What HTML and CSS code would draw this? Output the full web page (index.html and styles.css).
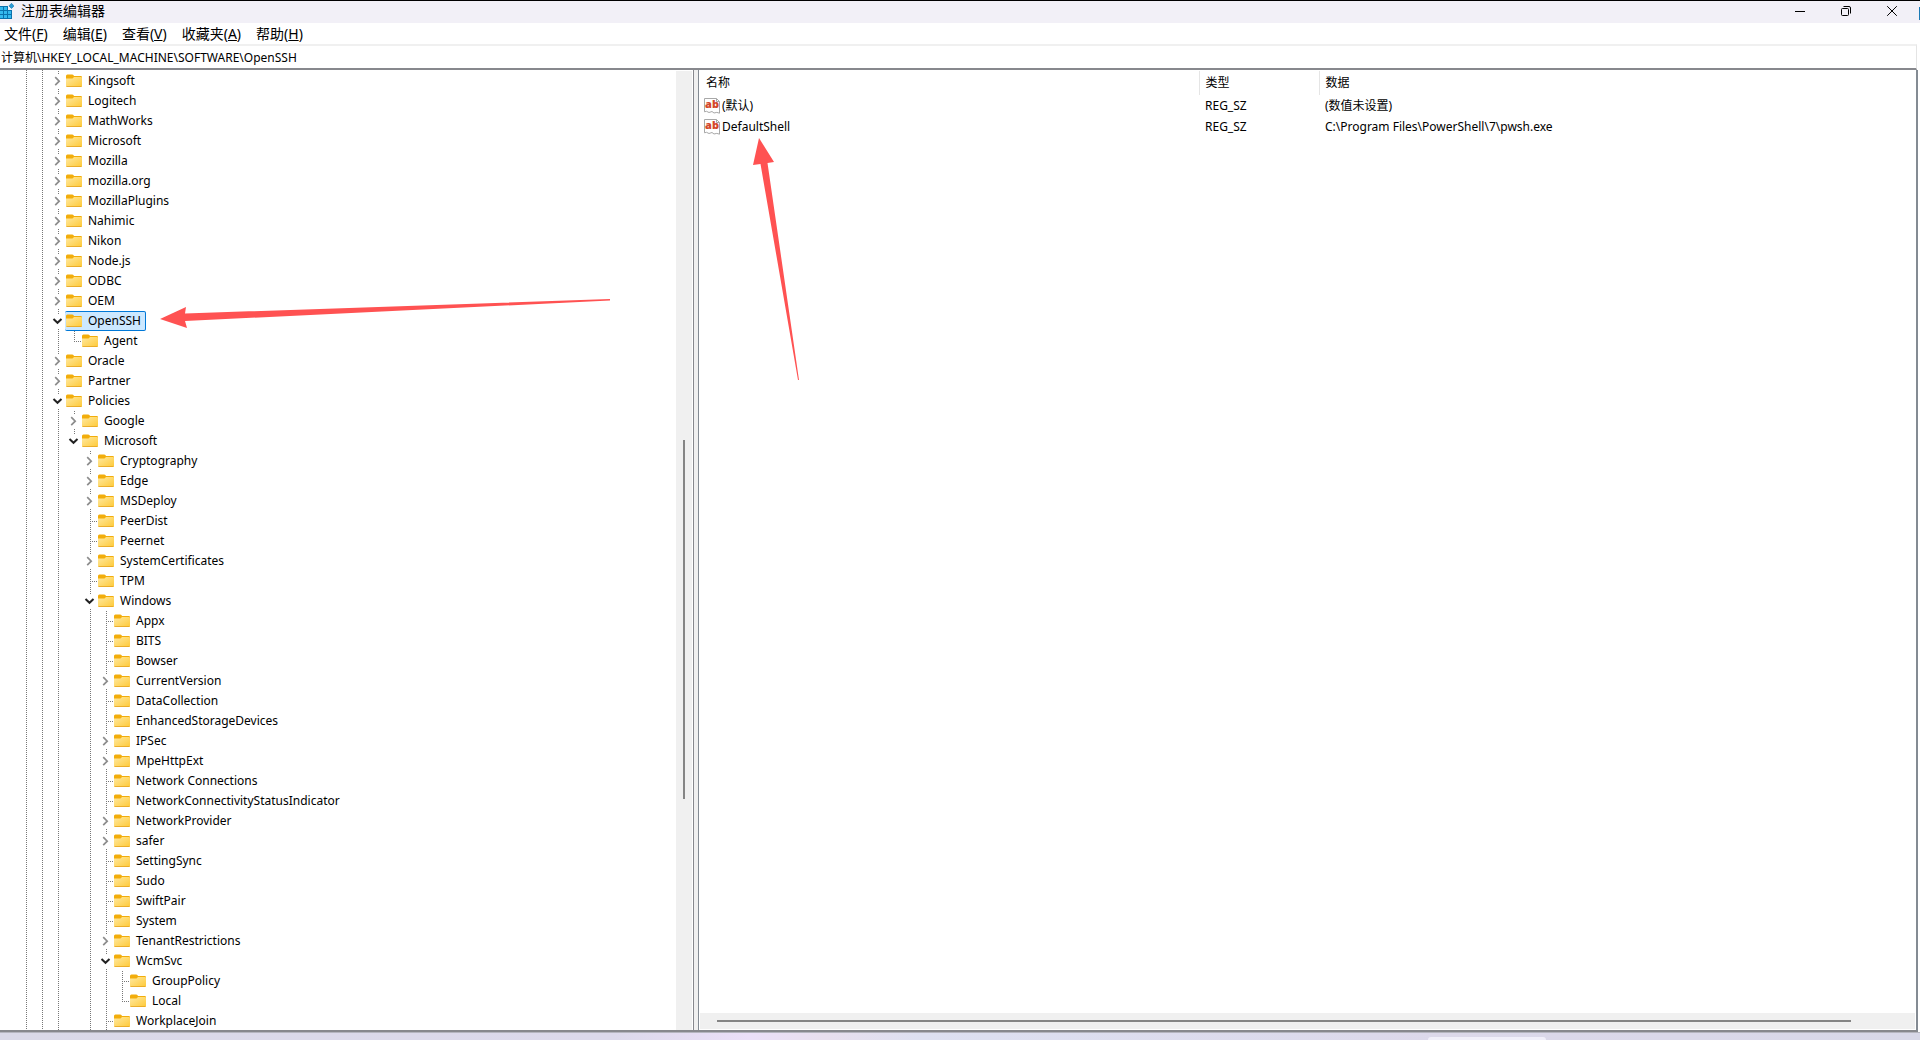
FILE: index.html
```html
<!DOCTYPE html>
<html lang="zh-CN">
<head>
<meta charset="utf-8">
<title>注册表编辑器</title>
<link rel="stylesheet" href="styles.css">
</head>
<body>
<svg class="defs" aria-hidden="true">
  <defs>
    <linearGradient id="folder-front" x1="0" y1="0" x2="1" y2="1">
      <stop offset="0" stop-color="#ffe9a0"/><stop offset="1" stop-color="#fec937"/>
    </linearGradient>
    <symbol id="folder" viewBox="0 0 16 16">
      <path d="M0 3Q0 1.400 1.400 1.400H6.200Q7 1.400 7.400 2.100L8 3H14.800Q16 3 16 4.200V8H0Z" fill="#f2ad0b"/>
      <path d="M0 5.500H6.500L8 4H15Q16 4 16 5V13Q16 14 15 14H1Q0 14 0 13Z" fill="url(#folder-front)"/>
      <path d="M.2 13.200Q.4 14 1 14H15Q15.600 14 15.800 13.200Z" fill="#e5a11c"/>
    </symbol>
    <symbol id="closed" viewBox="0 0 16 20"><path d="M5.200 6.200L9.200 10.200L5.200 14.200" fill="none" stroke="#8c8c8c" stroke-width="1.700"/></symbol>
    <symbol id="open" viewBox="0 0 16 20"><path d="M3.500 8L7.500 11.800L11.500 8" fill="none" stroke="#222" stroke-width="2"/></symbol>
    <symbol id="string-value" viewBox="0 0 16 16">
      <path d="M.5 .5H12.500L15.500 3.500V15.200L12.800 14.400L10 15L8 13.500L5 14.500L2.500 13.300L.5 13.800Z" fill="#fff" stroke="#a8a8a8"/>
      <path d="M12.500 .5V3.500H15.500" fill="none" stroke="#a8a8a8"/>
      <text x="8" y="10" text-anchor="middle" class="ab">ab</text>
    </symbol>
  </defs>
</svg>

<div class="window">
  <header class="titlebar">
    <svg class="app-icon" viewBox="0 0 14 16" aria-hidden="true">
      <path d="M0 3H8V7H12V16H0Z" fill="#0b72ad"/>
      <path d="M0 4H3V7H0ZM4 4H7V7H4ZM0 8H3V11H0ZM4 8H7V11H4ZM8 8H11V11H8ZM0 12H3V15H0ZM4 12H7V15H4ZM8 12H11V15H8Z" fill="#35b9ee"/>
      <path d="M11.500 .3L14 2.900L11.500 5.500L9 2.900Z" fill="#2a9bd3" stroke="#0b72ad" stroke-width=".6"/>
    </svg>
    <h1 class="title">注册表编辑器</h1>
    <div class="window-buttons">
      <button type="button" aria-label="最小化"><svg viewBox="0 0 12 12"><path d="M1 6.500H11"/></svg></button>
      <button type="button" aria-label="还原"><svg viewBox="0 0 12 12"><rect x="1.500" y="3.500" width="7" height="7" rx="1"/><path d="M3.500 1.500H9Q10.500 1.500 10.500 3V8.500"/></svg></button>
      <button type="button" aria-label="关闭"><svg viewBox="0 0 12 12"><path d="M1.200 1.200L10.800 10.800M10.800 1.200L1.200 10.800"/></svg></button>
    </div>
  </header>
  <nav class="menubar">
    <button type="button">文件(<u>F</u>)</button>
    <button type="button">编辑(<u>E</u>)</button>
    <button type="button">查看(<u>V</u>)</button>
    <button type="button">收藏夹(<u>A</u>)</button>
    <button type="button">帮助(<u>H</u>)</button>
  </nav>
  <input class="address" type="text" aria-label="地址" value="计算机\HKEY_LOCAL_MACHINE\SOFTWARE\OpenSSH">
  <main class="panes">
    <section class="tree-pane">
      <div class="tree-area"><ul class="tree" id="tree" role="tree"></ul></div>
      <div class="vscroll"><div class="vthumb"></div></div>
    </section>
    <div class="splitter"></div>
    <section class="list-pane">
      <table class="values">
        <thead><tr><th class="name">名称</th><th class="type">类型</th><th>数据</th></tr></thead>
        <tbody>
          <tr><td class="name"><span class="value"><svg class="icon" aria-hidden="true"><use href="#string-value"/></svg>(默认)</span></td><td>REG_SZ</td><td>(数值未设置)</td></tr>
          <tr><td class="name"><span class="value"><svg class="icon" aria-hidden="true"><use href="#string-value"/></svg>DefaultShell</span></td><td>REG_SZ</td><td>C:\Program Files\PowerShell\7\pwsh.exe</td></tr>
        </tbody>
      </table>
      <div class="hscroll"><div class="hthumb"></div></div>
    </section>
  </main>
</div>
<div class="desktop"><div class="taskbar-hint"></div></div>
<svg class="arrow arrow-key" viewBox="0 0 452 30" aria-hidden="true"><path d="M0 20L26 8L25 14.500L450 0V1.500L25 22L27 29Z"/></svg>
<svg class="arrow arrow-value" viewBox="0 0 48 244" aria-hidden="true"><path d="M6 0L21 24L14.500 25L46 242H45L7.500 26L0 27Z"/></svg>
<script src="tree.js"></script>
</body>
</html>
```

FILE: styles.css
```css
* { box-sizing: border-box; }
body {
  margin: 0;
  height: 100vh;
  display: flex;
  flex-direction: column;
  overflow: hidden;
  position: relative;
  background: #fff;
  color: #000;
  font: 12px/20px "Noto Sans", "Noto Sans CJK SC", sans-serif;
}
button, input { font: inherit; color: inherit; border: 0; background: none; padding: 0; margin: 0; }
ul { list-style: none; margin: 0; padding: 0; }
.defs { position: absolute; width: 0; height: 0; }
.ab { font: 800 11px "Open Sans", sans-serif; fill: #d4472b; }
.icon { width: 16px; height: 16px; flex: none; }

.window { flex: 1; min-height: 0; display: flex; flex-direction: column; border-top: 1px solid #000; }
.titlebar {
  height: 22px;
  flex: none;
  display: flex;
  align-items: center;
  padding: 0 5px 2px 0;
  background: linear-gradient(#1b7ab5, #1b7ab5) 100% 6px / 1px 13px no-repeat #f2f0f7;
}
.app-icon { width: 14px; height: 16px; margin-right: 7px; }
.title { margin: 0; flex: 1; font-size: 14px; font-weight: 400; line-height: 20px; }
.window-buttons { display: flex; }
.window-buttons button { width: 46px; height: 20px; display: grid; place-items: center; }
.window-buttons svg { width: 12px; height: 12px; fill: none; stroke: #000; }
.menubar { height: 21px; flex: none; display: flex; gap: 15px; padding-left: 4px; font-size: 14px; }
.address {
  height: 26px;
  flex: none;
  border-top: 2px solid #f0f0f0;
  border-bottom: 2px solid #87888d;
  border-right: 1px solid #e4e4e4;
  margin-right: 3px;
  padding: 0 1px;
}

.panes { flex: 1; min-height: 0; display: flex; border-bottom: 2px solid #87888d; margin-right: 2px; border-right: 2px solid #848b93; }
.tree-pane { width: 694px; flex: none; display: flex; border-right: 1px solid #87888d; }
.tree-area {
  flex: 1;
  overflow: hidden;
  padding: 1px 0 0 50px;
  background:
    repeating-linear-gradient(#777 0 1px, #fff 1px 2px) 26px 0 / 1px 100% no-repeat,
    repeating-linear-gradient(#777 0 1px, #fff 1px 2px) 42px 0 / 1px 100% no-repeat;
}
.tree ul { padding-left: 16px; }
.tree li { background: repeating-linear-gradient(#777 0 1px, #fff 1px 2px) 8px 0 / 1px 100% no-repeat; }
.tree li.last { background-size: 1px 10px; }
.row { height: 20px; display: flex; align-items: center; }
.toggle, .stub { width: 16px; height: 20px; flex: none; }
.toggle { display: grid; place-items: center; }
.toggle svg { width: 16px; height: 14px; background: #fff; }
.stub { background: repeating-linear-gradient(90deg, #777 0 1px, #fff 1px 2px) 8px 10px / 7px 1px no-repeat; }
.key { height: 20px; display: flex; align-items: center; gap: 6px; padding: 0 4px 0 0; white-space: nowrap; }
.key.selected { height: 18px; background: #cce8ff; box-shadow: -1px 0 0 #cce8ff, 0 0 0 1px #0078d7; border-radius: 1px; }
.vscroll { width: 17px; flex: none; background: #f0f0f0; border-right: 1px solid #fff; padding: 369px 0 0 7px; margin-top: 1px; }
.vthumb { width: 2px; height: 359px; background: #858585; }
.splitter { width: 4px; flex: none; background: #f0f0f0; }

.list-pane { flex: 1; min-width: 0; display: flex; flex-direction: column; justify-content: space-between; border-left: 1px solid #848b93; padding: 1px; }
.values { border-collapse: collapse; table-layout: fixed; width: 100%; }
.values th, .values td { font-weight: 400; text-align: left; padding: 0 0 0 6px; height: 21px; white-space: nowrap; }
.values th { height: 24px; }
.values .name { width: 499px; }
.values th.name, .values th.type { border-right: 1px solid #e5e5e5; }
.values .type { width: 120px; }
.values td.name { padding-left: 4px; }
.value { display: flex; align-items: center; gap: 2px; }
.hscroll { height: 16px; background: #f0f0f0; padding: 7px 64px 0 17px; }
.hthumb { height: 2px; background: #858585; }

.desktop {
  height: 8px;
  flex: none;
  display: flex;
  justify-content: flex-end;
  align-items: flex-end;
  padding-right: 374px;
  border-top: 1px solid #b5b5bf;
  background: linear-gradient(90deg, #dad9e8, #dcd9eb 32%, #ebdff8 39%, #e8dfee 43%, #dde0f1 48%, #dcd8ea 75%, #d8d8e8);
}
.taskbar-hint { width: 118px; height: 3px; background: #f1effa; border-radius: 3px 3px 0 0; }

.arrow { position: absolute; fill: #ff5252; }
.arrow-key { left: 160px; top: 299px; width: 452px; height: 30px; }
.arrow-value { left: 753px; top: 138px; width: 48px; height: 244px; }
```

FILE: tree.js
```js
const leaf = name => ({ name, leaf: true });
const closed = name => ({ name });
const open = (name, children) => ({ name, children });

const keys = [
  ...["Kingsoft", "Logitech", "MathWorks", "Microsoft", "Mozilla", "mozilla.org",
    "MozillaPlugins", "Nahimic", "Nikon", "Node.js", "ODBC", "OEM"].map(closed),
  { name: "OpenSSH", selected: true, children: [{ name: "Agent", leaf: true, last: true }] },
  closed("Oracle"), closed("Partner"),
  open("Policies", [
    closed("Google"),
    { name: "Microsoft", last: true, children: [
      closed("Cryptography"), closed("Edge"), closed("MSDeploy"), leaf("PeerDist"),
      leaf("Peernet"), closed("SystemCertificates"), leaf("TPM"),
      open("Windows", [
        leaf("Appx"), leaf("BITS"), leaf("Bowser"), closed("CurrentVersion"),
        leaf("DataCollection"), leaf("EnhancedStorageDevices"), closed("IPSec"),
        closed("MpeHttpExt"), leaf("Network Connections"),
        leaf("NetworkConnectivityStatusIndicator"), closed("NetworkProvider"),
        closed("safer"), leaf("SettingSync"), leaf("Sudo"), leaf("SwiftPair"),
        leaf("System"), closed("TenantRestrictions"),
        open("WcmSvc", [leaf("GroupPolicy"), { name: "Local", leaf: true, last: true }]),
        leaf("WorkplaceJoin")
      ])
    ] }
  ])
];

const render = k => `<li role="treeitem"${k.last ? ' class="last"' : ""}><div class="row">${
  k.leaf ? '<span class="stub"></span>'
    : `<button type="button" class="toggle" aria-label="${k.children ? "折叠" : "展开"} ${k.name}"><svg viewBox="0 3 16 14"><use href="#${k.children ? "open" : "closed"}" width="16" height="20"/></svg></button>`
}<button type="button" class="key${k.selected ? " selected" : ""}"><svg class="icon" aria-hidden="true"><use href="#folder"/></svg>${k.name}</button></div>${
  k.children ? `<ul role="group">${k.children.map(render).join("")}</ul>` : ""}</li>`;

document.getElementById("tree").innerHTML = keys.map(render).join("");
```
